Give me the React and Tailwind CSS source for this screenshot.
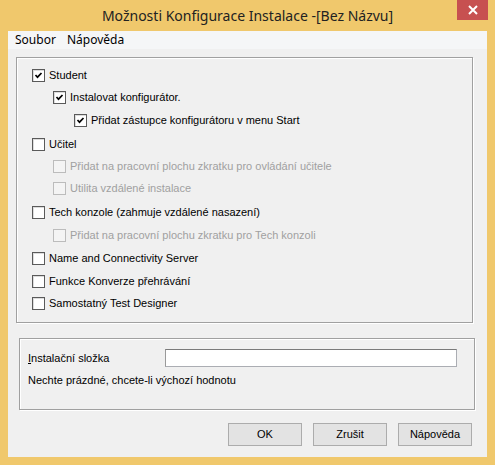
import React from 'react';

const Check = ({ checked, disabled }) => (
  <span
    className={`flex-none w-[13px] h-[13px] border flex items-center justify-center ${
      disabled ? 'border-[#bcbcbc] bg-[#f4f4f4]' : 'border-[#5a5a5a] bg-white shadow-[inset_1px_1px_0_#dcdcdc]'
    }`}
  >
    {checked && (
      <svg width="11" height="11" viewBox="0 0 11 11">
        <polyline points="2.5,5 4.5,7.2 8.5,3" fill="none" stroke="#000" strokeWidth="1.7" />
      </svg>
    )}
  </span>
);

// rows: indent level, margin above, state
const rows = [
  { label: 'Student', level: 0, mt: 'mt-0', checked: true },
  { label: 'Instalovat konfigurátor.', level: 1, mt: 'mt-[9px]', checked: true },
  { label: 'Přidat zástupce konfigurátoru v menu Start', level: 2, mt: 'mt-[10px]', checked: true },
  { label: 'Učitel', level: 0, mt: 'mt-[11px]' },
  { label: 'Přidat na pracovní plochu zkratku pro ovládání učitele', level: 1, mt: 'mt-[9px]', disabled: true },
  { label: 'Utilita vzdálené instalace', level: 1, mt: 'mt-[9px]', disabled: true },
  { label: 'Tech konzole (zahmuje vzdálené nasazení)', level: 0, mt: 'mt-[11px]' },
  { label: 'Přidat na pracovní plochu zkratku pro Tech konzoli', level: 1, mt: 'mt-[10px]', disabled: true },
  { label: 'Name and Connectivity Server', level: 0, mt: 'mt-[10px]' },
  { label: 'Funkce Konverze přehrávání', level: 0, mt: 'mt-[10px]' },
  { label: 'Samostatný Test Designer', level: 0, mt: 'mt-[9px]' },
];

const indent = ['pl-0', 'pl-[21px]', 'pl-[42px]'];

const Button = ({ children }) => (
  <button className="w-[74px] h-[23px] border border-[#acacac] bg-[#e3e3e3] text-[11px] text-black">
    {children}
  </button>
);

export default function App() {
  return (
    <div className="w-[495px] h-[465px] bg-[#f0c86c] flex flex-col font-['Liberation_Sans',Arial,sans-serif] text-[11px] text-black">
      {/* Title bar */}
      <div className="relative h-[31px] flex-none flex items-center justify-center">
        <span className="font-['Noto_Sans',sans-serif] text-[14px] text-[#222] leading-none">
          Možnosti Konfigurace Instalace -[Bez Názvu]
        </span>
        <div className="absolute top-0 right-[7px] w-[31px] h-[20px] bg-[#c75050] flex items-center justify-center">
          <svg width="10" height="10" viewBox="0 0 10 10">
            <path d="M1 1L9 9M9 1L1 9" stroke="#fff" strokeWidth="2" />
          </svg>
        </div>
      </div>

      {/* Client area */}
      <div className="mx-[8px] mb-[8px] flex-1 bg-[#f0f0f0] flex flex-col">
        {/* Menu bar */}
        <div className="h-[18px] flex-none bg-[#f5f6f7] flex items-center font-['Noto_Sans',sans-serif] text-[12px] leading-none">
          <span className="w-[59px] pl-[7px]">Soubor</span>
          <span>Nápověda</span>
        </div>

        {/* Components group */}
        <div className="mt-[8px] ml-[8px] w-[457px] h-[266px] flex-none border border-[#a0a0a0] shadow-[1px_1px_0_#fff,inset_1px_1px_0_#fff] pt-[11px] pl-[15px] flex flex-col">
          {rows.map((r) => (
            <div key={r.label} className={`flex items-center h-[13px] ${r.mt} ${indent[r.level]}`}>
              <Check checked={r.checked} disabled={r.disabled} />
              <span className={`ml-[4px] whitespace-nowrap leading-none ${r.disabled ? 'text-[#a0a0a0]' : 'text-black'}`}>
                {r.label}
              </span>
            </div>
          ))}
        </div>

        {/* Install folder group */}
        <div className="mt-[15px] ml-[11px] w-[456px] h-[72px] flex-none border border-[#a0a0a0] shadow-[1px_1px_0_#fff,inset_1px_1px_0_#fff] pt-[10px] pl-[8px] flex flex-col">
          <div className="flex items-center">
            <span className="w-[137px] leading-none">
              <span className="underline">I</span>nstalační složka
            </span>
            <div className="w-[292px] h-[18px] bg-white border border-[#abadb3] border-t-[#7a7a7a] border-l-[#9a9a9a]" />
          </div>
          <div className="mt-[7px] leading-[13px]">Nechte prázdné, chcete-li výchozí hodnotu</div>
        </div>

        {/* Buttons */}
        <div className="mt-[13px] pr-[15px] flex justify-end gap-[11px]">
          <Button>OK</Button>
          <Button>Zrušit</Button>
          <Button>Nápověda</Button>
        </div>
      </div>
    </div>
  );
}
